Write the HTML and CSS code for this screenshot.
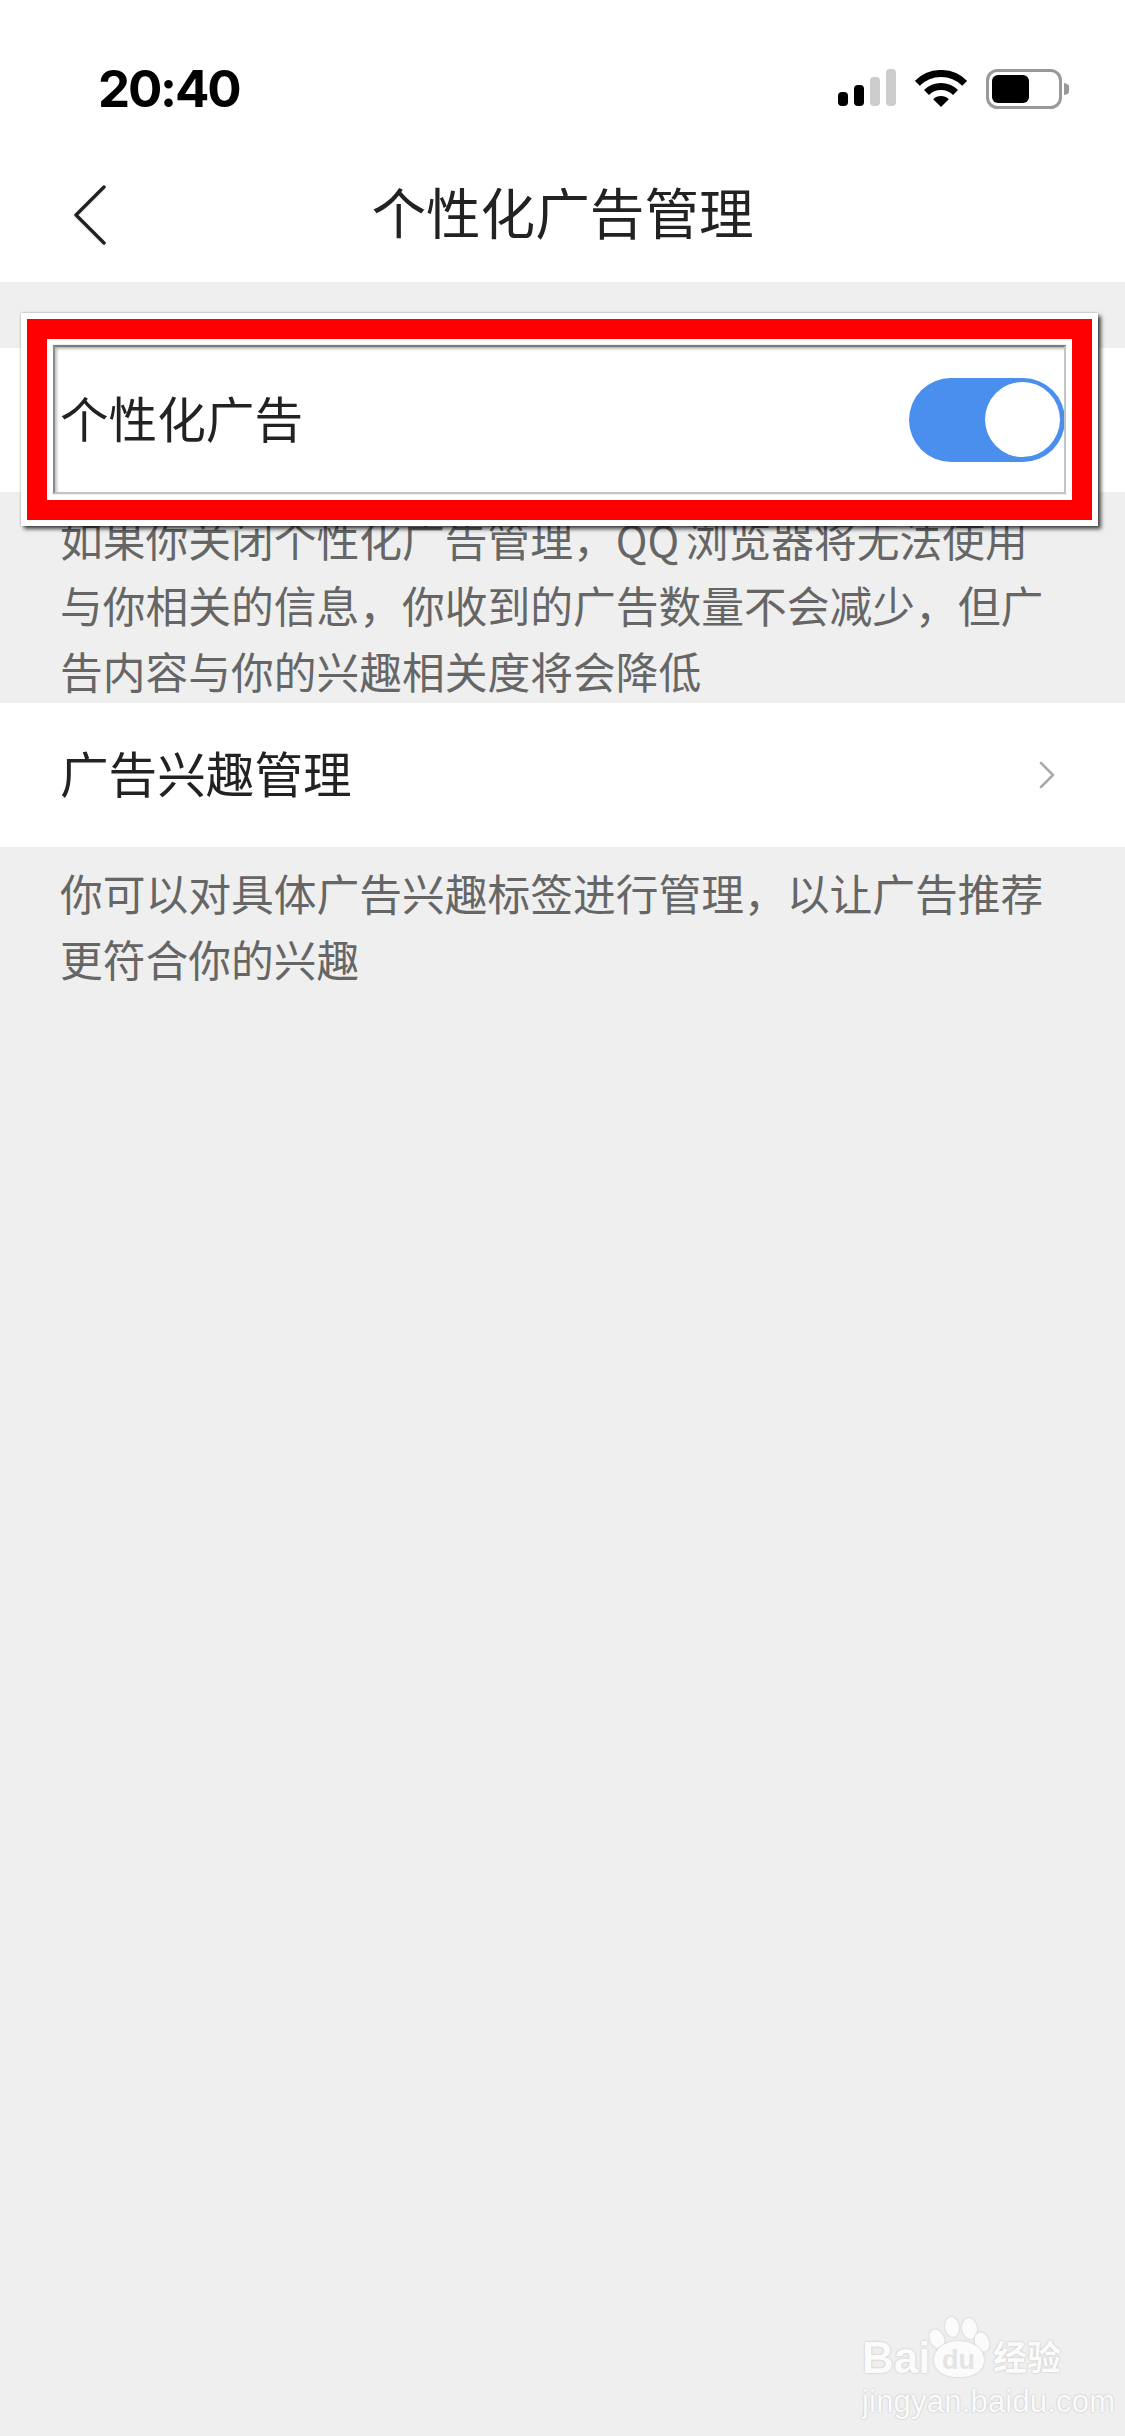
FILE: index.html
```html
<!DOCTYPE html>
<html lang="zh-CN">
<head>
<meta charset="utf-8">
<title>个性化广告管理</title>
<link rel="stylesheet" href="styles.css">
</head>
<body>
<div class="page">
  <header class="top">
    <div class="status">
      <span class="time">20:40</span>
      <div class="status-icons">
        <svg class="signal" width="58" height="37" viewBox="0 0 58 37">
          <rect x="0" y="23" width="10" height="14" rx="4" fill="#000"/>
          <rect x="16" y="16" width="10" height="21" rx="4" fill="#000"/>
          <rect x="32" y="8" width="10" height="29" rx="4" fill="#ccc"/>
          <rect x="48" y="0" width="10" height="37" rx="4" fill="#ccc"/>
        </svg>
        <svg class="wifi" width="52" height="38" viewBox="0 0 52 38">
          <path d="M2.3 13.3A33.5 33.5 0 0 1 49.7 13.3" fill="none" stroke="#000" stroke-width="7"/>
          <path d="M11.5 22.5A20.5 20.5 0 0 1 40.5 22.5" fill="none" stroke="#000" stroke-width="7"/>
          <path d="M26 37L18.2 29.2A11 11 0 0 1 33.8 29.2Z" fill="#000"/>
        </svg>
        <svg class="battery" width="83" height="40" viewBox="0 0 83 40">
          <rect x="1.5" y="1.5" width="73" height="37" rx="10" fill="none" stroke="#999" stroke-width="3"/>
          <rect x="6" y="6" width="37" height="28" rx="6" fill="#000"/>
          <path d="M78 14a6 6 0 0 1 0 12z" fill="#999"/>
        </svg>
      </div>
    </div>
    <nav class="nav">
      <svg class="back" width="32" height="60" viewBox="0 0 32 60">
        <path d="M30 2L2 30L30 58" fill="none" stroke="#222" stroke-width="3.5" stroke-linecap="round" stroke-linejoin="round"/>
      </svg>
      <h1 class="title">个性化广告管理</h1>
    </nav>
  </header>

  <main class="content">
    <div class="row row-first">
      <span class="row-label">个性化广告</span>
      <span class="switch"><span class="knob"></span></span>
    </div>
    <p class="note note-first">如果你关闭个性化广告管理，QQ 浏览器将无法使用与你相关的信息，你收到的广告数量不会减少，但广告内容与你的兴趣相关度将会降低</p>
    <div class="row">
      <span class="row-label">广告兴趣管理</span>
      <svg class="chev" width="16" height="28" viewBox="0 0 16 28">
        <path d="M2 2L14 14L2 26" fill="none" stroke="#aaa" stroke-width="2.5" stroke-linecap="round" stroke-linejoin="round"/>
      </svg>
    </div>
    <p class="note">你可以对具体广告兴趣标签进行管理，以让广告推荐更符合你的兴趣</p>
  </main>

  <div class="marker"><div class="marker-red"><div class="marker-inner"></div></div></div>

  <div class="watermark">
    <div class="wm-logo">
      <span class="wm-bai">Bai</span>
      <span class="wm-paw">
        <i class="toe toe1"></i><i class="toe toe2"></i><i class="toe toe3"></i><i class="toe toe4"></i>
        <i class="pad"></i>
        <span class="wm-du">du</span>
      </span>
      <span class="wm-cn">经验</span>
    </div>
    <div class="wm-url">jingyan.baidu.com</div>
  </div>
</div>
</body>
</html>
```

FILE: styles.css
```css
* { box-sizing: border-box; }
html, body { margin: 0; padding: 0; }
body {
  width: 1125px;
  height: 2436px;
  overflow: hidden;
  background: #efefef;
  font-family: "Noto Sans CJK SC", "Noto Sans", sans-serif;
}
.page { position: relative; width: 1125px; height: 2436px; }
.top { background: #fff; height: 282px; }
.status {
  height: 130px;
  padding: 65px 56px 0 98px;
  display: flex;
  justify-content: space-between;
  align-items: flex-start;
}
.time {
  font-family: Inter, "Liberation Sans", sans-serif;
  font-weight: 700;
  font-size: 51px;
  line-height: 48px;
  letter-spacing: -2.2px;
  color: #000;
}
.status-icons { display: flex; align-items: flex-start; gap: 19px; padding-top: 4px; }
.wifi { margin-top: 1px; }
.nav {
  position: relative;
  height: 152px;
  display: flex;
  align-items: center;
  justify-content: center;
}
.back { position: absolute; left: 74px; top: 55px; }
.title {
  margin: 0;
  font-size: 54.6px;
  font-weight: 400;
  color: #222;
  line-height: 70px;
  padding-top: 10px;
}
.content { display: flex; flex-direction: column; }
.row {
  height: 144px;
  background: #fff;
  padding: 0 70px 0 60px;
  display: flex;
  justify-content: space-between;
  align-items: center;
}
.row-first { margin-top: 66px; padding-right: 60px; }
.row-label { font-size: 48.6px; color: #222; line-height: 60px; position: relative; top: -3px; }
.switch {
  position: relative;
  width: 156px;
  height: 84px;
  border-radius: 42px;
  background: #4a8fed;
}
.knob {
  position: absolute;
  right: 5px;
  top: 4px;
  width: 75px;
  height: 75px;
  border-radius: 50%;
  background: #fff;
}
.note {
  margin: 0;
  padding: 12px 60px 14px;
  font-size: 42.75px;
  line-height: 66px;
  color: #666;
}
.note-first { height: 211px; padding-top: 13px; padding-bottom: 0; word-spacing: -3px; }

.marker {
  position: absolute;
  left: 21px;
  top: 313px;
  width: 1077px;
  height: 213px;
  border: 6px solid #fff;
  box-shadow: 3px 3px 4px rgba(0, 0, 0, .7), 0 0 2px rgba(0, 0, 0, .3);
}
.marker-red {
  height: 100%;
  border: 20px solid #f00;
}
.marker-inner {
  height: 100%;
  border: 5px solid #fff;
  position: relative;
}
.marker-inner::after {
  content: "";
  position: absolute;
  inset: 1px;
  border-top: 2px solid #7c7c7c;
  border-left: 2px solid #8c8c8c;
  border-right: 2px solid #c4c4c4;
  border-bottom: 2px solid #c4c4c4;
  box-shadow: inset 2px 2px 3px rgba(0, 0, 0, .25);
}

.watermark {
  position: absolute;
  left: 862px;
  top: 2315px;
  width: 205px;
  color: #fbfbfb;
  text-shadow: 0 0 2px #b4b4b4;
}
.wm-logo { position: relative; height: 68px; }
.wm-bai {
  position: absolute;
  left: 0;
  top: 18px;
  font-family: "Liberation Sans", Arial, sans-serif;
  font-weight: 700;
  font-size: 44px;
  line-height: 50px;
}
.wm-paw { position: absolute; left: 66px; top: 0; width: 66px; height: 66px; }
.toe { position: absolute; background: #fbfbfb; border-radius: 50%; box-shadow: 0 0 2px #bdbdbd; }
.toe1 { left: 2px; top: 14px; width: 14px; height: 20px; transform: rotate(-25deg); }
.toe2 { left: 17px; top: 2px; width: 14px; height: 20px; transform: rotate(-8deg); }
.toe3 { left: 34px; top: 3px; width: 15px; height: 21px; transform: rotate(-8deg); }
.toe4 { left: 47px; top: 17px; width: 14px; height: 20px; transform: rotate(-18deg); }
.pad { position: absolute; left: 6px; top: 26px; width: 50px; height: 36px; background: #fbfbfb; border-radius: 50% 50% 44% 44%; box-shadow: 0 0 2px #bdbdbd; }
.wm-du {
  position: absolute;
  left: 14px;
  top: 30px;
  font-family: "Liberation Sans", Arial, sans-serif;
  font-weight: 700;
  font-size: 27px;
  line-height: 30px;
  color: #e4e4e4;
  text-shadow: none;
}
.wm-cn {
  position: absolute;
  left: 131px;
  top: 18px;
  font-size: 34px;
  line-height: 46px;
  font-weight: 700;
  white-space: nowrap;
}
.wm-url {
  font-family: "Liberation Sans", Arial, sans-serif;
  font-size: 31px;
  line-height: 34px;
  margin-top: 2px;
  white-space: nowrap;
  letter-spacing: .2px;
}
.chev { display: block; margin-right: 0; }
```
